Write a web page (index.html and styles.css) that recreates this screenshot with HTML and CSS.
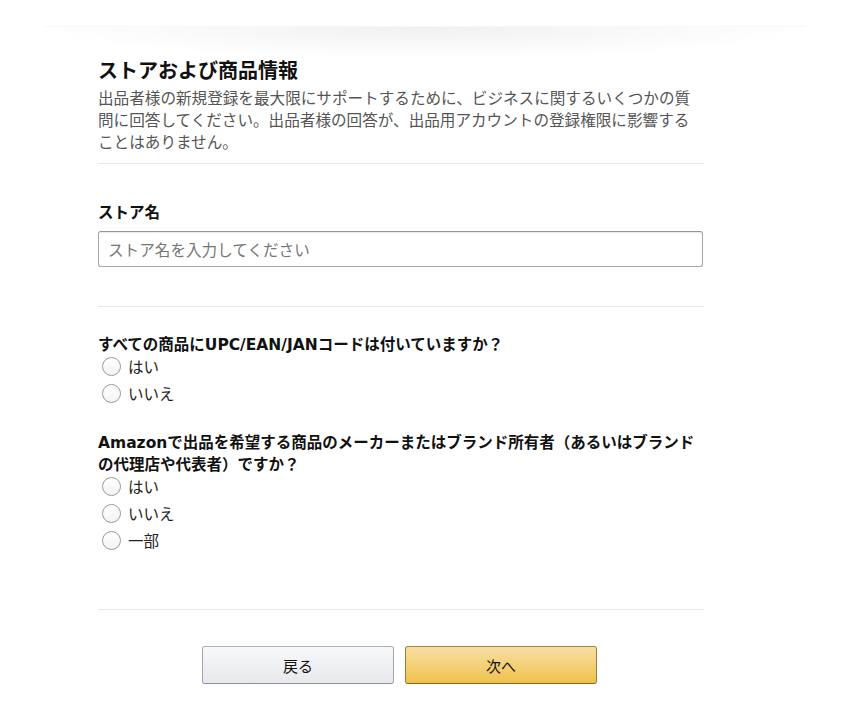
FILE: index.html
```html
<!DOCTYPE html>
<html lang="ja">
<head>
    <meta charset="UTF-8">
    <meta name="viewport" content="width=device-width, initial-scale=1.0">
    <title>ストアおよび商品情報</title>
    <link rel="stylesheet" href="styles.css">
</head>
<body>

<div class="top-shadow"></div>

<div class="page">
    <h2 class="section-title">ストアおよび商品情報</h2>
    <p class="section-desc">出品者様の新規登録を最大限にサポートするために、ビジネスに関するいくつかの質問に回答してください。出品者様の回答が、出品用アカウントの登録権限に影響することはありません。</p>

    <hr class="divider">

    <div class="form-group store-name">
        <label for="storeName" class="field-label">ストア名</label>
        <input type="text" id="storeName" name="storeName" placeholder="ストア名を入力してください">
    </div>

    <hr class="divider">

    <div class="question q-first">
        <div class="field-label">すべての商品にUPC/EAN/JANコードは付いていますか？</div>
        <label class="radio-row"><input type="radio" name="upc"><span>はい</span></label>
        <label class="radio-row"><input type="radio" name="upc"><span>いいえ</span></label>
    </div>

    <div class="question">
        <div class="field-label">Amazonで出品を希望する商品のメーカーまたはブランド所有者（あるいはブランドの代理店や代表者）ですか？</div>
        <label class="radio-row"><input type="radio" name="brand"><span>はい</span></label>
        <label class="radio-row"><input type="radio" name="brand"><span>いいえ</span></label>
        <label class="radio-row"><input type="radio" name="brand"><span>一部</span></label>
    </div>

    <hr class="divider bottom-divider">

    <div class="button-row">
        <button type="button" class="btn btn-back">戻る</button>
        <button type="button" class="btn btn-next">次へ</button>
    </div>
</div>

</body>
</html>
```

FILE: styles.css
```css
body {
    font-family: "Noto Sans CJK JP", "Noto Sans", sans-serif;
    color: #111;
    background-color: #fff;
    margin: 0;
}

.top-shadow {
    margin: 26px 45px 0 45px;
    height: 32px;
    background:
        radial-gradient(ellipse 50% 100% at 50% 0%, rgba(0, 0, 0, 0.06), rgba(0, 0, 0, 0) 100%);
    border-top: 1px solid rgba(0, 0, 0, 0.03);
}

.page {
    width: 606px;
    margin-left: 98px;
}

.section-title {
    font-size: 20px;
    line-height: 24px;
    font-weight: 700;
    margin: -1px 0 0 0;
}

.section-desc {
    font-size: 15.6px;
    line-height: 22px;
    color: #555;
    margin: 4px 0 0 0;
}

.divider {
    border: none;
    border-top: 1px solid #e7e7e7;
    margin: 11px 0 0 0;
}

.store-name {
    margin-top: 38px;
}

/* latin parts (UPC, Amazon) are wider in the original, DejaVu is close */
.field-label {
    display: block;
    font-family: "DejaVu Sans", "Noto Sans CJK JP", sans-serif;
    font-size: 15.5px;
    line-height: 22px;
    font-weight: 700;
}

input[type="text"] {
    display: block;
    box-sizing: border-box;
    width: 605px;
    height: 36px;
    margin-top: 7px;
    margin-bottom: 39px;
    padding: 0 9px;
    font-family: inherit;
    font-size: 15.6px;
    border: 1px solid #a6a6a6;
    border-top-color: #949494;
    border-radius: 3px;
    box-shadow: 0 1px 0 rgba(255, 255, 255, 0.5), 0 1px 0 rgba(0, 0, 0, 0.07) inset;
}

input[type="text"]::placeholder {
    color: #777;
}

.question {
    margin-top: 28px;
}

.q-first {
    margin-top: 27px;
}

.radio-row {
    display: flex;
    align-items: center;
    height: 22px;
    margin-bottom: 5px;
    font-size: 15.5px;
    color: #222;
}

.radio-row:first-of-type {
    margin-top: -1px;
}

.radio-row input[type="radio"] {
    appearance: none;
    -webkit-appearance: none;
    box-sizing: border-box;
    width: 19px;
    height: 19px;
    margin: 0 7px 0 4px;
    border: 1px solid #999;
    border-radius: 50%;
    background: linear-gradient(#fff, #f3f3f3);
}

.bottom-divider {
    margin-top: 58px;
}

.button-row {
    display: flex;
    justify-content: center;
    gap: 11px;
    margin-top: 36px;
    padding-right: 3px;
}

.btn {
    width: 192px;
    height: 38px;
    font-family: inherit;
    font-size: 15px;
    color: #111;
    border-radius: 3px;
    border: 1px solid;
    cursor: pointer;
}

.btn-back {
    background: linear-gradient(to bottom, #f7f8fa, #e7e9ec);
    border-color: #adb1b8 #a2a6ac #8d9096;
}

.btn-next {
    background: linear-gradient(to bottom, #f7dfa5, #f0c14b);
    border-color: #a88734 #9c7e31 #846a29;
}
```
